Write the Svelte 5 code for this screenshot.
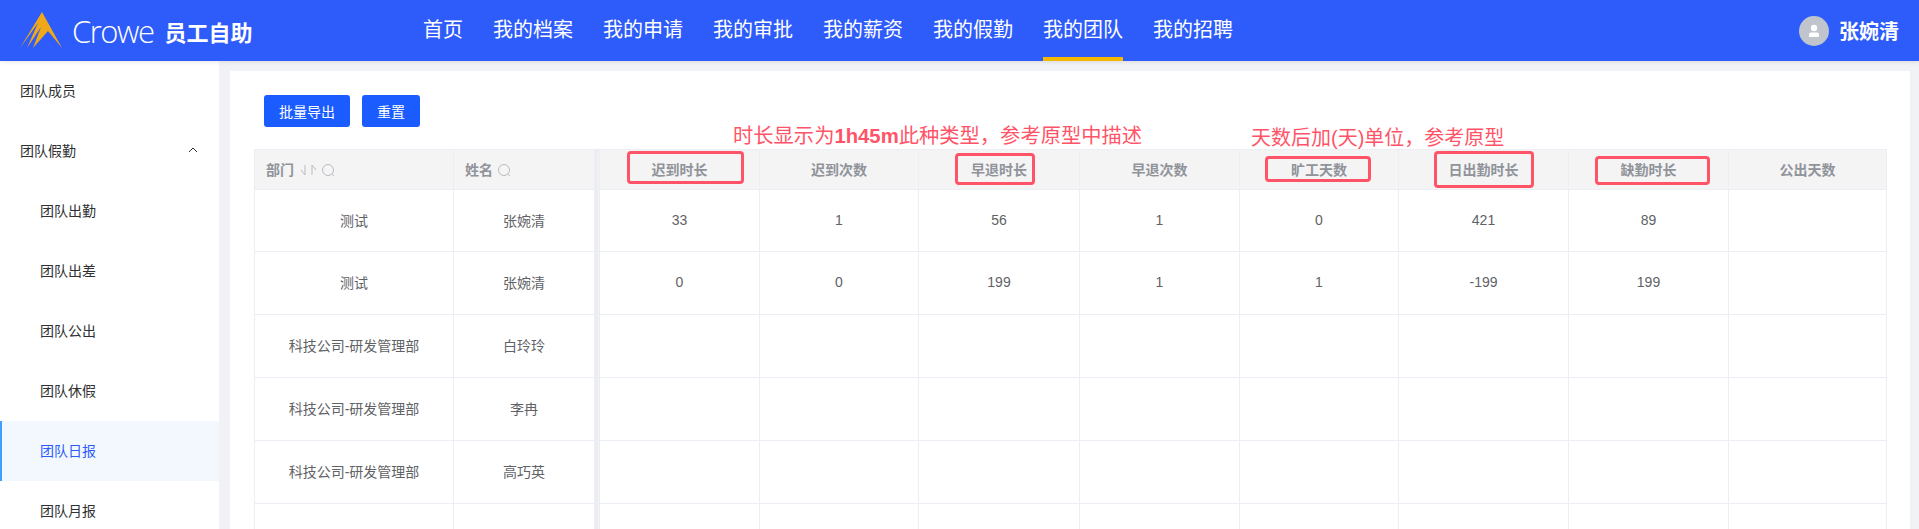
<script lang="ts">
	const nav = ['首页', '我的档案', '我的申请', '我的审批', '我的薪资', '我的假勤', '我的团队', '我的招聘'];
	const menu = [
		{ label: '团队成员' },
		{ label: '团队假勤', open: true },
		{ label: '团队出勤', sub: true },
		{ label: '团队出差', sub: true },
		{ label: '团队公出', sub: true },
		{ label: '团队休假', sub: true },
		{ label: '团队日报', sub: true, active: true },
		{ label: '团队月报', sub: true }
	];
	const columns = [
		{ title: '迟到时长', width: 160 },
		{ title: '迟到次数', width: 159 },
		{ title: '早退时长', width: 161 },
		{ title: '早退次数', width: 160 },
		{ title: '旷工天数', width: 159 },
		{ title: '日出勤时长', width: 170 },
		{ title: '缺勤时长', width: 160 },
		{ title: '公出天数', width: 158 }
	];
	const rows = [
		{ dept: '测试', name: '张婉清', vals: ['33', '1', '56', '1', '0', '421', '89', ''] },
		{ dept: '测试', name: '张婉清', vals: ['0', '0', '199', '1', '1', '-199', '199', ''] },
		{ dept: '科技公司-研发管理部', name: '白玲玲', vals: [] },
		{ dept: '科技公司-研发管理部', name: '李冉', vals: [] },
		{ dept: '科技公司-研发管理部', name: '高巧英', vals: [] },
		{ dept: '', name: '', vals: [] }
	];
	const marks = [
		{ left: 627, top: 151, width: 117, height: 33 },
		{ left: 955, top: 153, width: 80, height: 32 },
		{ left: 1265, top: 156, width: 106, height: 26 },
		{ left: 1434, top: 151, width: 100, height: 37 },
		{ left: 1595, top: 156, width: 115, height: 29 }
	];
</script>

<div class="page">
	<header class="topbar">
		<div class="brand">
			<svg class="spire" width="42" height="37" viewBox="0 0 42 37">
				<path d="M22 0 L42 36 L28 19 L13 36 L21 15 L7 36 L18 11 L0 36 Z" fill="#f0a818" />
			</svg>
			<span class="crowe">Crowe</span>
			<span class="product">员工自助</span>
		</div>
		<nav class="nav">
			{#each nav as item}
				<span class="nav-item" class:active={item === '我的团队'}>{item}</span>
			{/each}
		</nav>
		<div class="user">
			<span class="avatar">
				<svg width="14" height="14" viewBox="0 0 14 14">
					<circle cx="7" cy="4" r="3.2" fill="#fff" />
					<path d="M2 13 V10.5 Q2 8.5 4 8.5 H10 Q12 8.5 12 10.5 V13 Z" fill="#fff" />
				</svg>
			</span>
			<span class="user-name">张婉清</span>
		</div>
	</header>

	<div class="body">
		<aside class="side">
			{#each menu as item}
				<div class="side-item" class:sub={item.sub} class:active={item.active}>
					<span>{item.label}</span>
					{#if item.open}
						<svg width="10" height="6" viewBox="0 0 10 6">
							<path d="M1 5 L5 1 L9 5" fill="none" stroke="#303133" stroke-width="1" />
						</svg>
					{/if}
				</div>
			{/each}
		</aside>

		<main class="main">
			<section class="card">
				<div class="actions">
					<button class="btn">批量导出</button>
					<button class="btn">重置</button>
				</div>
				<table class="grid">
					<colgroup>
						<col style="width: 199px" />
						<col style="width: 141px" />
						<col style="width: 5px" />
						{#each columns as col}
							<col style="width: {col.width}px" />
						{/each}
					</colgroup>
					<thead>
						<tr>
							<th class="left">
								部门
								<svg class="ico sort" width="36" height="16" viewBox="0 0 36 16">
									<path d="M1 8 L5 13 V3 M12 13 V3 L16 8" fill="none" stroke="#b9bbc0" stroke-width="1" />
									<circle cx="28" cy="8" r="5.5" fill="none" stroke="#b9bbc0" stroke-width="1" />
									<path d="M32 12 L34 14" stroke="#b9bbc0" stroke-width="1" />
								</svg>
							</th>
							<th class="left">
								姓名
								<svg class="ico" width="14" height="16" viewBox="0 0 14 16">
									<circle cx="6" cy="8" r="5.5" fill="none" stroke="#b9bbc0" stroke-width="1" />
									<path d="M10 12 L12 14" stroke="#b9bbc0" stroke-width="1" />
								</svg>
							</th>
							<th class="gutter"></th>
							{#each columns as col}
								<th>{col.title}</th>
							{/each}
						</tr>
					</thead>
					<tbody>
						{#each rows as row}
							<tr>
								<td>{row.dept}</td>
								<td>{row.name}</td>
								<td class="gutter"></td>
								{#each columns as _, i}
									<td>{row.vals[i] ?? ''}</td>
								{/each}
							</tr>
						{/each}
					</tbody>
				</table>
			</section>
		</main>
	</div>

	<span class="note note-a">时长显示为<b>1h45m</b>此种类型，参考原型中描述</span>
	<span class="note note-b">天数后加(天)单位，参考原型</span>
	{#each marks as m}
		<span class="mark" style="left: {m.left}px; top: {m.top}px; width: {m.width}px; height: {m.height}px"></span>
	{/each}
</div>

<style>
	:global(body) {
		margin: 0;
		overflow: hidden;
		font-family: "Liberation Sans", "Noto Sans CJK SC", sans-serif;
	}

	.page {
		position: relative;
		width: 1919px;
		height: 529px;
		overflow: hidden;
		background: #f0f2f5;
	}

	.topbar {
		display: flex;
		align-items: center;
		height: 61px;
		background: #2e5cfa;
		box-shadow: 0 1px 4px rgba(0, 0, 0, 0.1);
		position: relative;
		z-index: 1;
		color: #fff;
	}

	.brand {
		display: flex;
		align-items: center;
		width: 423px;
		flex-shrink: 0;
		padding-left: 20px;
		box-sizing: border-box;
	}

	.spire {
		margin-right: 10px;
	}

	.crowe {
		font-family: "Open Sans", sans-serif;
		font-weight: 300;
		font-size: 31px;
		letter-spacing: -1.5px;
		margin-right: 11px;
	}

	.product {
		font-size: 22px;
		font-weight: 700;
	}

	.nav {
		display: flex;
		gap: 30px;
		height: 100%;
	}

	.nav-item {
		display: flex;
		align-items: center;
		font-size: 20px;
		box-sizing: border-box;
		border-bottom: 4px solid transparent;
	}

	.nav-item.active {
		border-bottom-color: #f5b800;
	}

	.user {
		margin-left: auto;
		display: flex;
		align-items: center;
		gap: 10px;
		padding-right: 20px;
	}

	.avatar {
		display: flex;
		align-items: center;
		justify-content: center;
		width: 30px;
		height: 30px;
		border-radius: 50%;
		background: #c0c4cc;
	}

	.user-name {
		font-size: 20px;
		font-weight: 700;
	}

	.body {
		display: flex;
		height: 468px;
	}

	.side {
		width: 219px;
		flex-shrink: 0;
		background: #fff;
	}

	.side-item {
		display: flex;
		align-items: center;
		justify-content: space-between;
		height: 60px;
		padding: 0 21px 2px 20px;
		box-sizing: border-box;
		font-size: 14px;
		color: #303133;
	}

	.side-item.sub {
		padding-left: 40px;
	}

	.side-item.active {
		padding-left: 38px;
		border-left: 2px solid #409eff;
		background: #f3f8ff;
		color: #2e5cfa;
	}

	.main {
		flex: 1;
		padding: 10px 9px 0 11px;
		min-width: 0;
	}

	.card {
		background: #fff;
		height: 100%;
		padding: 24px 24px 0 24px;
		box-sizing: border-box;
	}

	.actions {
		display: flex;
		gap: 12px;
		padding-left: 10px;
		margin-bottom: 22px;
	}

	.btn {
		height: 32px;
		padding: 0 15px;
		border: none;
		border-radius: 3px;
		background: #1a5cff;
		color: #fff;
		font-family: inherit;
		font-size: 14px;
	}

	.grid {
		width: 1632px;
		table-layout: fixed;
		border-collapse: collapse;
		font-size: 14px;
		color: #606266;
	}

	.grid th {
		height: 40px;
		padding: 0 0 2px;
		box-sizing: border-box;
		background: #f4f4f5;
		border: 1px solid #ebeef5;
		color: #909399;
		font-weight: 600;
		text-align: center;
	}

	.grid th.left {
		text-align: left;
		padding-left: 11px;
	}

	.grid td {
		height: 63px;
		padding: 0 0 2px;
		box-sizing: border-box;
		border: 1px solid #ebeef5;
		text-align: center;
	}

	.grid tbody tr:first-child td {
		height: 62px;
	}

	.grid th.gutter,
	.grid td.gutter {
		background: linear-gradient(to right, #e6e7e9, #f6f6f7);
	}

	.ico {
		vertical-align: -3px;
		margin-left: 1px;
	}

	.ico.sort {
		margin-left: 2px;
	}

	.note {
		position: absolute;
		color: #ff5468;
		line-height: 26px;
		white-space: nowrap;
	}

	.note-a {
		left: 733px;
		top: 123px;
		font-size: 20.3px;
	}

	.note-b {
		left: 1251px;
		top: 125px;
		font-size: 20px;
	}

	.mark {
		position: absolute;
		box-sizing: border-box;
		border: 3px solid #ff5468;
		border-radius: 4px;
	}
</style>
